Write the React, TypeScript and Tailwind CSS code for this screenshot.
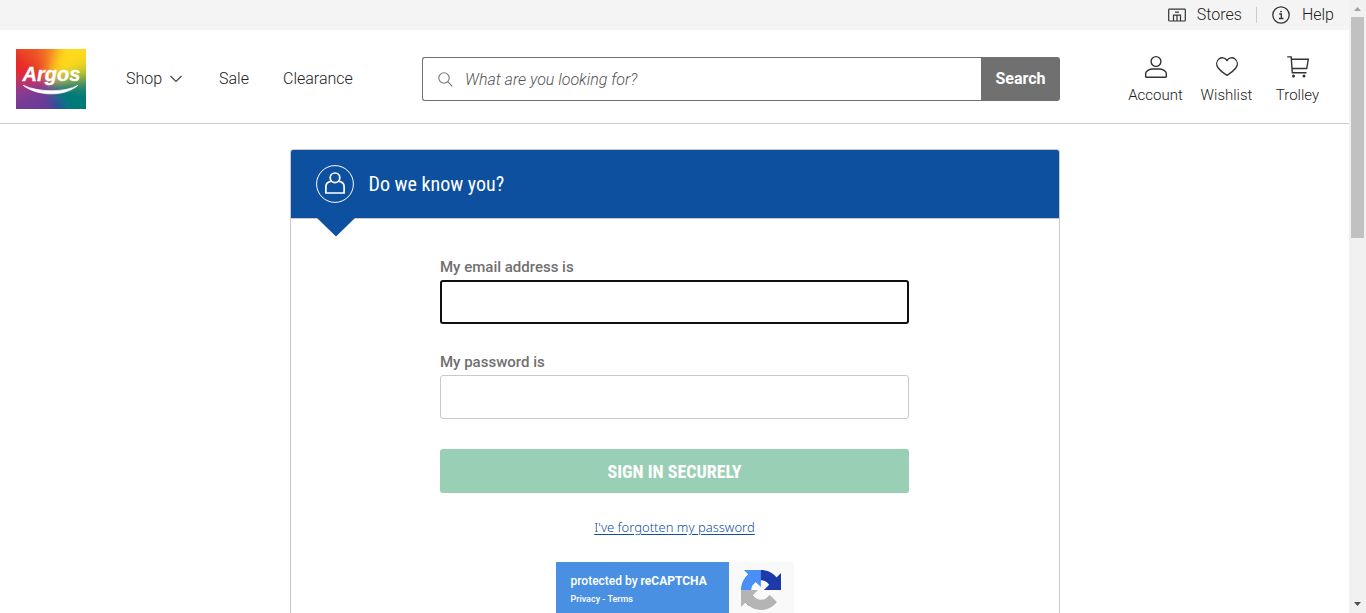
import { useEffect, useRef } from "react";
import type { ReactNode } from "react";

const condensed =
  "font-['Roboto_Condensed','Open_Sans_Condensed','Liberation_Sans_Narrow','Roboto',sans-serif]";

function Logo() {
  return (
    <a href="#home" aria-label="Argos home" className="block h-[60px] w-[70px] shrink-0">
      <svg viewBox="0 0 70 60" className="h-full w-full overflow-hidden">
        <defs>
          <filter id="blend" x="-30%" y="-30%" width="160%" height="160%">
            <feGaussianBlur stdDeviation="6" />
          </filter>
        </defs>
        <rect width="70" height="60" fill="#b0503c" />
        <g filter="url(#blend)">
          <path d="M34 32L-20 -20H24Z" fill="#ef4f26" />
          <path d="M34 32L20 -20H48Z" fill="#f47a20" />
          <path d="M34 32L46 -20H100V2Z" fill="#ffd91a" />
          <path d="M34 32L100 0V24Z" fill="#c9cc2a" />
          <path d="M34 32L100 20V44Z" fill="#4fa045" />
          <path d="M34 32L100 40V90H60Z" fill="#027a76" />
          <path d="M34 32L64 90H30Z" fill="#24479d" />
          <path d="M34 32L34 90H-20V58Z" fill="#703a96" />
          <path d="M34 32L-20 64V36Z" fill="#8c3a93" />
          <path d="M34 32L-20 40V26Z" fill="#b8305f" />
          <path d="M34 32L-20 28V-20Z" fill="#e62c28" />
        </g>
        <text
          x="6.500"
          y="32"
          fill="#fff"
          stroke="#fff"
          strokeWidth="0.300"
          fontFamily="Liberation Sans, Arial, sans-serif"
          fontSize="20"
          fontWeight="700"
          fontStyle="italic"
        >
          Argos
        </text>
        <path d="M7 36.200C21 47.500 49 48 62 36.200C50 43.500 22 43.500 7 36.200Z" fill="#fff" stroke="#fff" strokeWidth="0.700" strokeLinejoin="round" />
      </svg>
    </a>
  );
}

function StoreIcon() {
  return (
    <svg viewBox="0 0 18 14" className="h-[14px] w-[18px]" fill="none" stroke="#333" strokeWidth="1.200">
      <rect x="0.700" y="1.200" width="16.600" height="11.800" rx="0.800" />
      <path d="M7 4.100h4M5.500 13V7.200h7V13M9 7.200V13" />
    </svg>
  );
}

function InfoIcon() {
  return (
    <svg viewBox="0 0 18 18" className="h-[18px] w-[18px]" fill="none" stroke="#333" strokeWidth="1.300">
      <circle cx="9" cy="9" r="8.200" />
      <path d="M7.300 8h2v4.500M7 12.500h4.500" />
      <circle cx="9" cy="5.600" r="0.900" fill="#333" stroke="none" />
    </svg>
  );
}

function AccountIcon() {
  return (
    <svg viewBox="0 0 24 24" className="h-6 w-6" fill="none" stroke="#333" strokeWidth="1.400">
      <circle cx="12" cy="6.500" r="4.900" />
      <path d="M1.700 21.500v-3.200c0-2.200 3.500-4.300 7.300-4.300h6c3.800 0 7.300 2.100 7.300 4.300v3.200c0 .4-.2.700-.6.700H2.300c-.4 0-.6-.3-.6-.7z" />
    </svg>
  );
}

function HeartIcon() {
  return (
    <svg viewBox="0 0 24 24" className="h-6 w-6" fill="none" stroke="#333" strokeWidth="1.400" strokeLinejoin="round">
      <path d="M12 5.600C10.200 2.500 6.500 1.900 4.200 3.800C1 6.300 1.100 10.200 3.200 13C5.300 15.800 8.500 18.300 12 20.300C15.500 18.300 18.700 15.800 20.800 13C22.900 10.200 23 6.300 19.800 3.800C17.500 1.900 13.800 2.500 12 5.600Z" />
    </svg>
  );
}

function TrolleyIcon() {
  return (
    <svg viewBox="0 0 24 24" className="h-6 w-6" fill="none" stroke="#333" strokeWidth="1.400">
      <path d="M1.200 1.900h4L6.300 17.800h14.200M5.500 4.300h16.800l-1.600 9.200H6.100" />
      <circle cx="7.500" cy="21" r="1.500" fill="#333" stroke="none" />
      <circle cx="18" cy="21" r="1.500" fill="#333" stroke="none" />
    </svg>
  );
}

function Action({ label, icon }: { label: string; icon: ReactNode }) {
  return (
    <a href={"#" + label.toLowerCase()} className="flex w-[71px] flex-col items-center gap-2">
      {icon}
      <span className="text-[15px] leading-4">{label}</span>
    </a>
  );
}

function RecaptchaMark() {
  return (
    <svg viewBox="0 0 64 64" className="h-10 w-10">
      <path
        fill="#1c3aa9"
        d="M64 31.955l-.033-1.370V4.687l-7.160 7.160C50.948 4.674 42.033.093 32.050.093c-10.389 0-19.622 4.960-25.458 12.640l11.736 11.860a15.550 15.550 0 0 1 4.754-5.334c2.050-1.600 4.952-2.906 8.968-2.906.485 0 .860.057 1.135.163 4.976.393 9.288 3.140 11.828 7.124l-8.307 8.307L64 31.953"
      />
      <path
        fill="#4a8ff5"
        d="M31.862.094l-1.370.033H4.594l7.160 7.160C4.580 13.147 0 22.060 0 32.046c0 10.388 4.960 19.622 12.640 25.458L24.500 45.768a15.550 15.550 0 0 1-5.334-4.754c-1.600-2.050-2.906-4.952-2.906-8.968 0-.485.057-.860.163-1.135.393-4.976 3.140-9.288 7.124-11.828l8.307 8.307L31.860.095"
      />
      <path
        fill="#b4b4b4"
        d="M.001 32.045l.033 1.370v25.898l7.160-7.160c5.860 7.173 14.774 11.754 24.760 11.754 10.388 0 19.622-4.960 25.458-12.640l-11.736-11.860a15.550 15.550 0 0 1-4.754 5.334c-2.050 1.600-4.952 2.906-8.968 2.906-.485 0-.860-.057-1.135-.163-4.976-.393-9.288-3.140-11.828-7.124l8.307-8.307c-10.522.040-22.400.066-27.295-.005"
      />
    </svg>
  );
}

function Scrollbar() {
  return (
    <div aria-hidden="true" className="flex w-[17px] shrink-0 flex-col items-center bg-[#f1f1f1]">
      <svg viewBox="0 0 17 17" className="h-[17px] w-[17px]">
        <path d="M5 11L8.500 7L12 11Z" fill="#a3a3a3" />
      </svg>
      <div className="h-[221px] w-[13px] bg-[#c1c1c1]" />
      <svg viewBox="0 0 17 17" className="mt-auto h-[17px] w-[17px]">
        <path d="M5 6L8.500 10L12 6Z" fill="#505050" />
      </svg>
    </div>
  );
}

export default function App() {
  const email = useRef<HTMLInputElement>(null);
  useEffect(() => email.current?.focus(), []);

  return (
    <div className="flex h-screen bg-white font-['Roboto','Liberation_Sans',sans-serif] font-light text-[#222]">
      <div className="min-w-0 flex-1 overflow-y-auto [scrollbar-width:none]">
        <div className="flex h-[30px] items-center justify-end bg-[#f4f4f4] pr-[15px] text-base">
          <a href="#stores" className="flex items-center gap-[11px] pr-[14px]">
            <StoreIcon />
            Stores
          </a>
          <a href="#help" className="flex h-4 items-center gap-3 border-l border-[#ccc] pl-[15px]">
            <InfoIcon />
            Help
          </a>
        </div>

        <header className="flex items-center border-b border-[#ccc] pt-[19px] pr-4 pb-[14px] pl-4">
          <Logo />
          <nav className="ml-10 flex w-[296px] shrink-0 items-center text-base">
            <button type="button" className="flex w-[93px] items-center gap-2">
              Shop
              <svg viewBox="0 0 12 8" className="h-2 w-3" fill="none" stroke="#444" strokeWidth="1.200">
                <path d="M0.500 1L6 6.500L11.500 1" />
              </svg>
            </button>
            <a href="#sale" className="w-16">Sale</a>
            <a href="#clearance">Clearance</a>
          </nav>
          <form role="search" className="flex h-11 w-[638px] min-w-0 shrink">
            <label className="flex min-w-0 flex-1 items-center gap-3 rounded-l-[3px] border border-r-0 border-[#707070] pl-[15px]">
              <svg viewBox="0 0 15 15" className="h-[15px] w-[15px] shrink-0" fill="none" stroke="#777" strokeWidth="1.100">
                <circle cx="6" cy="6" r="5.200" />
                <path d="M9.700 9.700L14.300 14.300" />
              </svg>
              <input
                type="search"
                aria-label="Search"
                placeholder="What are you looking for?"
                className="h-full min-w-0 flex-1 text-base font-light outline-none placeholder:text-[#555] placeholder:italic"
              />
            </label>
            <button type="submit" className="w-[79px] rounded-r-[3px] bg-[#707070] text-base font-bold text-white">
              Search
            </button>
          </form>
          <div className="ml-auto flex shrink-0">
            <Action label="Account" icon={<AccountIcon />} />
            <Action label="Wishlist" icon={<HeartIcon />} />
            <Action label="Trolley" icon={<TrolleyIcon />} />
          </div>
        </header>

        <main className="mx-auto mt-[25px] max-w-[770px] rounded-[3px] border border-[#c9c9c9]">
          <div className="relative flex h-[69px] items-center gap-[15px] rounded-t-[2px] border-b border-[#c9c9c9] bg-[#0d50a0] pl-[25px] text-white">
            <svg viewBox="0 0 38 38" className="h-[38px] w-[38px]" fill="none" stroke="#fff">
              <circle cx="19" cy="19" r="18.400" strokeWidth="1" />
              <circle cx="19" cy="12.800" r="4.800" strokeWidth="1.700" />
              <path d="M14.800 16.300C11.500 16.800 9.900 18.800 9.900 21.500V28H28.100V21.500C28.100 18.800 26.500 16.800 23.200 16.300" strokeWidth="1.700" />
            </svg>
            <h1 className={`${condensed} text-[20px] font-normal`}>Do we know you?</h1>
            <svg viewBox="0 0 38 20" className="absolute top-[67px] left-[26px] h-5 w-[38px]">
              <path d="M0 0H38V1L19 19.500L0 1Z" fill="#0d50a0" />
            </svg>
          </div>
          <form className="mx-auto flex w-full max-w-[469px] flex-col pt-[38px] pb-10">
            <label htmlFor="email" className="text-[15px] leading-5 font-medium text-[#707070]">
              My email address is
            </label>
            <input
              ref={email}
              id="email"
              type="email"
              className="mt-[3px] h-11 rounded-[3px] border-2 border-[#101010] px-3 caret-transparent outline-none"
            />
            <label htmlFor="password" className="mt-7 text-[15px] leading-5 font-medium text-[#707070]">
              My password is
            </label>
            <input
              id="password"
              type="password"
              className="mt-[3px] h-11 rounded-[3px] border border-[#c9c9c9] px-3 outline-none"
            />
            <button
              type="submit"
              className={`${condensed} mt-[30px] h-11 rounded-[3px] bg-[#99cfb4] text-[18px] font-bold text-white`}
            >
              SIGN IN SECURELY
            </button>
            <a
              href="#forgotten"
              className="mt-6 self-center font-['Noto_Sans','Open_Sans',sans-serif] text-[13px] leading-5 font-light text-[#0d50a0] underline underline-offset-2"
            >
              I've forgotten my password
            </a>
            <div className="mt-[25px] flex h-[60px] w-[238px] self-center bg-[#f9f9f9] text-white">
              <div className="flex w-[173px] flex-col bg-[#4a90e2] pt-[11px] pl-[15px]">
                <p className="text-[12px] leading-4 font-medium">
                  protected by <strong className="font-bold">reCAPTCHA</strong>
                </p>
                <p className="mt-1 text-[9px] leading-3 font-medium">
                  <a href="#privacy">Privacy</a> - <a href="#terms">Terms</a>
                </p>
              </div>
              <div className="flex flex-1 items-center justify-center pb-1">
                <RecaptchaMark />
              </div>
            </div>
          </form>
        </main>
      </div>
      <Scrollbar />
    </div>
  );
}
